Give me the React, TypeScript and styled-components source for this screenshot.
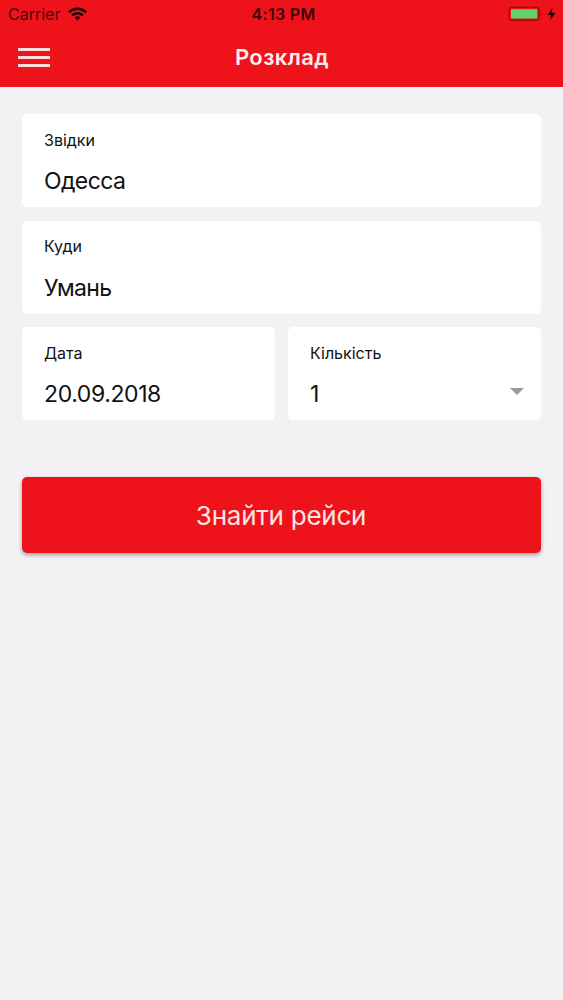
import React from 'react';
import styled, { createGlobalStyle } from 'styled-components';

const Global = createGlobalStyle`
  * { box-sizing: border-box; }
  body { margin: 0; background: #f3f1f4; }
`;
const Screen = styled.div`
  min-height: 1000px;
  background: #f3f1f4;
  font-family: Inter, "Liberation Sans", sans-serif;
  color: #111;
`;
const Header = styled.header`
  height: 87px;
  background: #ee131b;
`;
const StatusBar = styled.div`
  display: grid;
  grid-template-columns: 1fr auto 1fr;
  align-items: center;
  height: 28px;
  padding: 0 7px 0 8px;
`;
const Carrier = styled.div`
  display: flex;
  align-items: center;
  gap: 8px;
  color: #4a0508;
  font-size: 16px;
  line-height: 20px;
`;
const WifiIcon = styled.svg`
  width: 19px;
  height: 14px;
  margin-top: -1px;
  color: #1c0203;
`;
const Clock = styled.div`
  padding-left: 3px;
  color: #3b0507;
  font-size: 16px;
  font-weight: 600;
  letter-spacing: 0.3px;
  line-height: 20px;
`;
const Power = styled.div`
  display: flex;
  align-items: center;
  justify-content: flex-end;
`;
const BatteryIcon = styled.svg`
  width: 48px;
  height: 16px;
`;
const NavBar = styled.div`
  display: grid;
  grid-template-columns: 1fr auto 1fr;
  align-items: center;
  height: 59px;
  padding: 0 18px;
`;
const MenuButton = styled.button`
  display: flex;
  flex-direction: column;
  gap: 5px;
  width: 32px;
  padding: 0;
  border: 0;
  background: none;
`;
const MenuLine = styled.span`
  height: 3px;
  background: #fddcdd;
`;
const Title = styled.h1`
  margin: 0;
  padding: 0 0 2px 1px;
  color: #fdeeee;
  font-size: 22px;
  font-weight: 600;
  letter-spacing: 0.4px;
  line-height: 28px;
`;
const Form = styled.main`
  display: flex;
  flex-direction: column;
  gap: 13.4px;
  padding: 27.4px 22px 0;
`;
const Row = styled.div`
  display: grid;
  grid-template-columns: 1fr 1fr;
  gap: 13px;
`;
const Field = styled.div`
  height: 93px;
  padding: 14.6px 17px 0 22px;
  background: #fff;
  border-radius: 5px;
`;
const Label = styled.div`
  font-size: 16px;
  line-height: 22px;
`;
const Value = styled.div<{ $tracking?: number }>`
  display: flex;
  align-items: center;
  justify-content: space-between;
  margin-top: 15.4px;
  font-size: 23px;
  letter-spacing: ${({ $tracking = -0.6 }) => $tracking}px;
  line-height: 30px;
`;
const Caret = styled.svg`
  width: 14px;
  height: 7px;
  margin-top: -6px;
  fill: #9a9a9a;
`;
const Submit = styled.button`
  height: 76px;
  margin-top: 43.4px;
  padding: 2px 1px 0 0;
  border: 0;
  border-radius: 5px;
  background: #ee131b;
  box-shadow: 0 2px 4px rgba(0, 0, 0, 0.35);
  color: #fde4e4;
  font-family: inherit;
  font-size: 26px;
  letter-spacing: -0.25px;
`;

export default function App() {
  return (
    <Screen>
      <Global />
      <Header>
        <StatusBar>
          <Carrier>
            <span>Carrier</span>
            <WifiIcon viewBox="0 0 20 14" fill="none" stroke="currentColor" strokeWidth="2.6">
              <path d="M1 5a13 13 0 0 1 18 0M4.3 8.4a8.2 8.2 0 0 1 11.4 0" />
              <path d="M7 10.8a4.3 4.3 0 0 1 6 0L10 14z" fill="currentColor" stroke="none" />
            </WifiIcon>
          </Carrier>
          <Clock>4:13 PM</Clock>
          <Power>
            <BatteryIcon viewBox="0 0 48 16">
              <rect x="1.2" y="1.3" width="30" height="13" rx="2.6" fill="none" stroke="#a10d10" strokeWidth="1.4" />
              <rect x="3" y="3.2" width="26.2" height="9.3" rx="0.8" fill="#5fd568" />
              <path d="M33.2 5.6q1.7 2.2 0 4.4z" fill="#a10d10" />
              <path d="M44.6 1.6 39.6 9h3.6l-1.2 5.6 5.4-7.8h-3.8z" fill="#1c0203" />
            </BatteryIcon>
          </Power>
        </StatusBar>
        <NavBar>
          <MenuButton aria-label="Меню"><MenuLine /><MenuLine /><MenuLine /></MenuButton>
          <Title>Розклад</Title>
        </NavBar>
      </Header>
      <Form>
        <Field><Label>Звідки</Label><Value>Одесса</Value></Field>
        <Field><Label>Куди</Label><Value>Умань</Value></Field>
        <Row>
          <Field><Label>Дата</Label><Value $tracking={-0.4}>20.09.2018</Value></Field>
          <Field>
            <Label>Кількість</Label>
            <Value>1<Caret viewBox="0 0 14 7"><path d="M0 0h14L7 7z" /></Caret></Value>
          </Field>
        </Row>
        <Submit>Знайти рейси</Submit>
      </Form>
    </Screen>
  );
}
